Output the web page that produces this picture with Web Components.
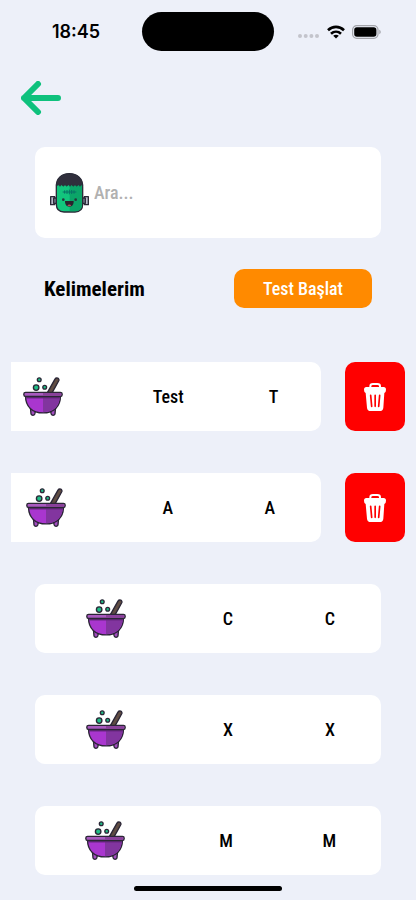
<!DOCTYPE html>
<html lang="tr">
<head>
<meta charset="utf-8">
<meta name="viewport" content="width=device-width, initial-scale=1">
<title>Kelimelerim</title>
<style>
  body {
    margin: 0;
    background: #edf0f9;
    color: #000;
    font-family: "Roboto Condensed", Lato, "Liberation Sans", sans-serif;
    font-size: 18px;
    font-weight: 500;
    line-height: 24px;
  }
</style>
</head>
<body>
<words-page>
  <word-row open>Test<span slot="meaning">T</span></word-row>
  <word-row open>A<span slot="meaning">A</span></word-row>
  <word-row>C<span slot="meaning">C</span></word-row>
  <word-row>X<span slot="meaning">X</span></word-row>
  <word-row>M<span slot="meaning">M</span></word-row>
</words-page>

<script>
function attach(element, html) {
  const template = document.createElement('template');
  template.innerHTML = html;
  element.attachShadow({ mode: 'open' });
  element.shadowRoot.appendChild(template.content.cloneNode(true));
}

class StatusBar extends HTMLElement {
  constructor() {
    super();
    attach(this, `
    <style>
      :host {
        display: grid;
        grid-template-columns: 1fr 132px 1fr;
        align-items: center;
        height: 39px;
        padding: 12px 0;
      }
      time {
        justify-self: center;
        padding-left: 10px;
        font: 600 18px/24px Inter, sans-serif;
      }
      .island {
        height: 39px;
        border-radius: 20px;
        background: #000;
      }
      .icons {
        display: flex;
        align-items: center;
        gap: 7px;
        padding-left: 24px;
      }
      svg {
        display: block;
      }
      .signal {
        align-self: flex-end;
      }
    </style>
    <time>18:45</time>
    <div class="island"></div>
    <div class="icons">
      <svg class="signal" width="22" height="6" viewBox="0 0 22 6" fill="#c3c4cc">
        <circle cx="2" cy="3" r="2"/><circle cx="7.7" cy="3" r="2"/>
        <circle cx="13.4" cy="3" r="2"/><circle cx="19" cy="3" r="2"/>
      </svg>
      <svg width="18" height="14" viewBox="0 0 18 14" fill="none" stroke="#000" stroke-width="2.6">
        <path d="M1 5.2C5.600 .7 12.400 .7 17 5.200"/>
        <path d="M4 8.800C6.900 6 11.100 6 14 8.800"/>
        <path d="M9 13.600 6.200 10.800C7.800 9.300 10.200 9.300 11.800 10.800Z" fill="#000" stroke="none"/>
      </svg>
      <svg width="30" height="14" viewBox="0 0 30 14">
        <rect x=".6" y=".6" width="25.400" height="12.800" rx="4.200" fill="none" stroke="#a3a4aa" stroke-width="1.200"/>
        <rect x="2.200" y="2.200" width="22.200" height="9.600" rx="2.700"/>
        <path d="M27.300 4.800C29.200 5.500 29.200 8.500 27.300 9.200Z" fill="#a3a4aa"/>
      </svg>
    </div>
    `);
  }
}
customElements.define('status-bar', StatusBar);

class SearchBox extends HTMLElement {
  constructor() {
    super();
    attach(this, `
    <style>
      :host {
        display: block;
      }
      label {
        display: flex;
        align-items: center;
        gap: 5px;
        height: 91px;
        padding: 0 15px;
        border-radius: 10px;
        background: #fff;
      }
      svg {
        flex: none;
      }
      input {
        flex: 1;
        min-width: 0;
        padding: 0;
        border: 0;
        outline: 0;
        background: none;
        font: inherit;
      }
      input::placeholder {
        color: #b1b1b1;
        opacity: 1;
      }
    </style>
    <label>
      <svg width="39" height="40" viewBox="0 0 117 120">
        <g stroke="#2b2a38" stroke-width="4" stroke-linejoin="round">
          <path d="M2 71h12v24H2zM103 71h12v24h-12z" fill="#b9bccb"/>
          <path d="M11 75h10v16H11zM96 75h10v16H96z" fill="#777c90"/>
          <path d="M19 41C19 16 35 2 58 2S98 16 98 41V93C98 109 89 117 75 117H42C28 117 19 109 19 93Z" fill="#12c57d"/>
        </g>
        <path d="M59 30H96V93C96 108 88 115 75 115H59Z" fill="#0ba568"/>
        <path d="M19 39C19 16 35 2 58 2S98 16 98 39L94 35 90 40 85 35 80 40 75 35 70 40 65 35 60 40 55 35 50 40 45 35 40 40 35 35 30 40 25 35Z" fill="#302f3c" stroke="#2b2a38" stroke-width="2"/>
        <path d="M38 57H79M44 52V62M51 51V63M58 50V64M65 51V63M72 52V62" stroke="#087266" stroke-width="3" fill="none"/>
        <path d="M45 84H71C71 96 66 101 58 101S45 96 45 84Z" fill="#29232d"/>
        <path d="M52 97C55 94 61 94 64 97C61 101 55 101 52 97Z" fill="#b3505d"/>
        <circle cx="40" cy="80" r="4" fill="#243b3c"/><circle cx="77" cy="80" r="4" fill="#243b3c"/>
      </svg>
      <input type="text" placeholder="Ara..." aria-label="Ara">
    </label>
    `);
  }
}
customElements.define('search-box', SearchBox);

class WordRow extends HTMLElement {
  constructor() {
    super();
    attach(this, `
    <style>
      :host {
        display: flex;
        height: 69px;
        overflow: hidden;
      }
      :host([open]) {
        justify-content: flex-end;
      }
      .card {
        display: flex;
        flex: 0 0 calc(100% - 48px);
        align-items: center;
        justify-content: space-around;
        margin: 0 24px;
        border-radius: 10px;
        background: #fff;
      }
      .pot {
        width: 50px;
        height: 39px;
      }
      button {
        display: none;
        flex: 0 0 60px;
        align-items: center;
        justify-content: center;
        padding: 0;
        border: 0;
        border-radius: 10px;
        background: #f00;
      }
      :host([open]) button {
        display: flex;
      }
    </style>
    <div class="card">
      <svg class="pot" viewBox="0 0 116 114" stroke="#2b2636" stroke-width="4" stroke-linejoin="round">
        <path d="M21 86H39L34 108C32 113 25 113 23 108ZM77 86H95L93 108C91 113 84 113 82 108Z" fill="#a34dc0"/>
        <path d="M93 6C97 0 107 4 104 11L84 47H70Z" fill="#604d43"/>
        <path d="M7 56H109C109 86 89 105 58 105S7 86 7 56Z" fill="#a936cf"/>
        <path d="M58 58H107C106 85 88 103 58 103Z" fill="#82359f" stroke="none"/>
        <path d="M9 60H107" stroke="#692781" stroke-width="5"/>
        <rect x="2" y="45" width="112" height="12" rx="5" fill="#a95abf"/>
        <path d="M58 47H110V55H58Z" fill="#894099" stroke="none"/>
        <g fill="#20bd86"><circle cx="47" cy="8" r="5.500"/><circle cx="38" cy="31" r="8"/><circle cx="63" cy="30" r="5.500"/></g>
      </svg>
      <slot></slot>
      <slot name="meaning"></slot>
    </div>
    <button type="button" aria-label="Sil">
      <svg width="22" height="28" viewBox="0 0 66 84">
        <path d="M19 15V10C19 5 22 3 27 3H40C45 3 48 5 48 10V15" fill="none" stroke="#fff" stroke-width="6"/>
        <path d="M7 12H59Q66 12 66 20T61 30L58 74Q57 84 47 84H20Q10 84 9 74L5 30Q0 28 0 20T7 12Z" fill="#fff"/>
        <path d="M20 37 23 70M33.500 37V70M47 37 44 70" stroke="#f00" stroke-width="5" stroke-linecap="round"/>
      </svg>
    </button>
    `);
  }
}
customElements.define('word-row', WordRow);

class WordsPage extends HTMLElement {
  constructor() {
    super();
    attach(this, `
    <style>
      :host {
        display: block;
      }
      .back {
        display: block;
        margin: 18px 21px 32px;
        padding: 0;
        border: 0;
        background: none;
      }
      .back svg {
        display: block;
      }
      search-box {
        margin: 0 35px;
      }
      header {
        display: flex;
        align-items: center;
        justify-content: space-between;
        margin: 31px 44px 54px;
      }
      h1 {
        margin: 0;
        font-size: 21px;
        font-weight: 700;
      }
      .start {
        width: 138px;
        height: 39px;
        padding: 0;
        border: 0;
        border-radius: 10px;
        background: #ff8a00;
        color: #fff;
        font: inherit;
      }
      .list {
        display: grid;
        gap: 42px;
        padding: 0 11px 24px;
      }
      .home {
        position: fixed;
        bottom: 9px;
        left: 50%;
        width: 148px;
        height: 5px;
        border-radius: 3px;
        background: #000;
        transform: translateX(-50%);
      }
    </style>
    <status-bar></status-bar>
    <button class="back" type="button" aria-label="Geri">
      <svg width="40" height="34" viewBox="0 0 40 34" fill="none" stroke="#0fc17d" stroke-width="6" stroke-linecap="round" stroke-linejoin="round">
        <path d="M37 17H3M17 3 3 17 17 31"/>
      </svg>
    </button>
    <search-box></search-box>
    <header>
      <h1>Kelimelerim</h1>
      <button class="start" type="button">Test Başlat</button>
    </header>
    <div class="list"><slot></slot></div>
    <div class="home"></div>
    `);
  }
}
customElements.define('words-page', WordsPage);
</script>
</body>
</html>
